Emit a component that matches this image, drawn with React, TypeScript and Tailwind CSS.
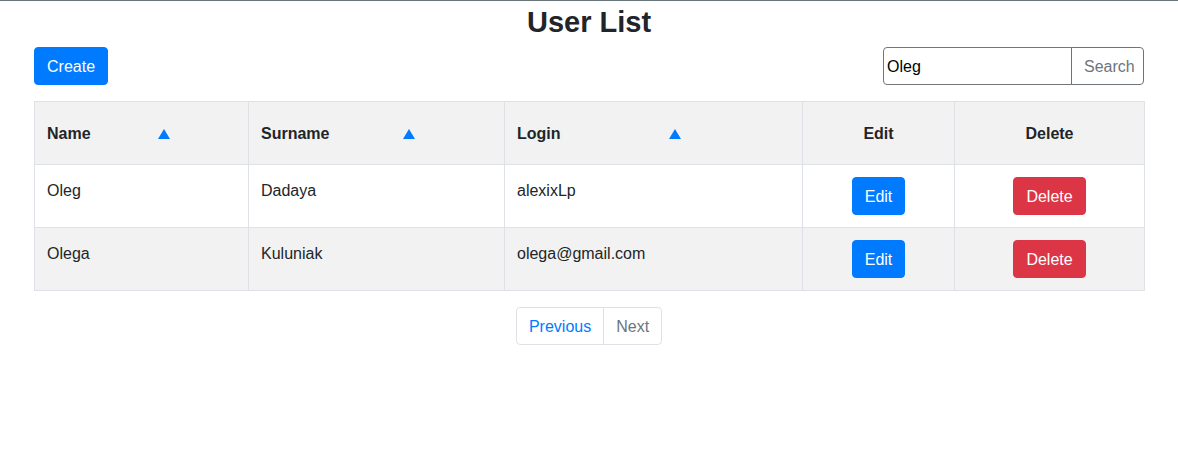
import React from "react"

interface User {
  name: string
  surname: string
  login: string
}

const users: User[] = [
  { name: "Oleg", surname: "Dadaya", login: "alexixLp" },
  { name: "Olega", surname: "Kuluniak", login: "olega@gmail.com" },
]

function SortArrow() {
  return (
    <svg width="12" height="10" viewBox="0 0 12 10" className="shrink-0">
      <polygon points="6,0 12,10 0,10" fill="#007bff" />
    </svg>
  )
}

function SortHeader({ label, textWidth }: { label: string; textWidth: string }) {
  return (
    <div className="flex items-center">
      <span className={textWidth}>{label}</span>
      <SortArrow />
    </div>
  )
}

export default function App() {
  return (
    <div
      className="min-h-[460px] border-t border-[#69777d] bg-white text-[16px] text-[#212529]"
      style={{ fontFamily: '"Liberation Sans", Arial, sans-serif' }}
    >
      <h1 className="pt-[2px] text-center text-[29px] font-bold leading-[38px]">User List</h1>

      <div className="mx-auto w-[1110px]">
        <div className="mt-[6px] flex items-center justify-between">
          <button className="h-[38px] rounded border border-[#007bff] bg-[#007bff] px-3 pt-px leading-6 text-white">
            Create
          </button>
          <div className="flex">
            <input
              defaultValue="Oleg"
              className="h-[38px] w-[189px] rounded-l border border-[#767676] px-[3px] pt-px text-black outline-none"
            />
            <button className="-ml-px h-[38px] w-[73px] rounded-r border border-[#6c757d] px-3 pt-px text-[#6c757d]">
              Search
            </button>
          </div>
        </div>

        <table className="mt-4 w-[1110px] table-fixed border-collapse border border-[#dee2e6]">
          <colgroup>
            <col className="w-[214px]" />
            <col className="w-[256px]" />
            <col className="w-[298px]" />
            <col className="w-[152px]" />
            <col className="w-[190px]" />
          </colgroup>
          <thead>
            <tr className="bg-[#f2f2f2]">
              <th className="h-[63px] border border-[#dee2e6] px-3 pt-px text-left align-middle font-bold">
                <SortHeader label="Name" textWidth="w-[111px]" />
              </th>
              <th className="h-[63px] border border-[#dee2e6] px-3 pt-px text-left align-middle font-bold">
                <SortHeader label="Surname" textWidth="w-[142px]" />
              </th>
              <th className="h-[63px] border border-[#dee2e6] px-3 pt-px text-left align-middle font-bold">
                <SortHeader label="Login" textWidth="w-[152px]" />
              </th>
              <th className="h-[63px] border border-[#dee2e6] px-3 pt-px text-center align-middle font-bold">Edit</th>
              <th className="h-[63px] border border-[#dee2e6] px-3 pt-px text-center align-middle font-bold">Delete</th>
            </tr>
          </thead>
          <tbody>
            {users.map((u, i) => (
              <tr key={u.login} className={i % 2 === 1 ? "bg-[#f2f2f2]" : "bg-white"}>
                <td className="border border-[#dee2e6] px-3 pt-[14px] pb-3 align-top leading-6">{u.name}</td>
                <td className="border border-[#dee2e6] px-3 pt-[14px] pb-3 align-top leading-6">{u.surname}</td>
                <td className="border border-[#dee2e6] px-3 pt-[14px] pb-3 align-top leading-6">{u.login}</td>
                <td className="border border-[#dee2e6] p-3 text-center align-top">
                  <button className="h-[38px] rounded border border-[#007bff] bg-[#007bff] px-3 pt-px leading-6 text-white">
                    Edit
                  </button>
                </td>
                <td className="border border-[#dee2e6] p-3 text-center align-top">
                  <button className="h-[38px] rounded border border-[#dc3545] bg-[#dc3545] px-3 pt-px leading-6 text-white">
                    Delete
                  </button>
                </td>
              </tr>
            ))}
          </tbody>
        </table>

        <div className="mt-4 flex justify-center">
          <div className="flex rounded border border-[#dee2e6]">
            <button className="h-9 px-3 pt-px leading-6 text-[#007bff]">Previous</button>
            <button className="h-9 border-l border-[#dee2e6] px-3 pt-px leading-6 text-[#6c757d]">Next</button>
          </div>
        </div>
      </div>
    </div>
  )
}
